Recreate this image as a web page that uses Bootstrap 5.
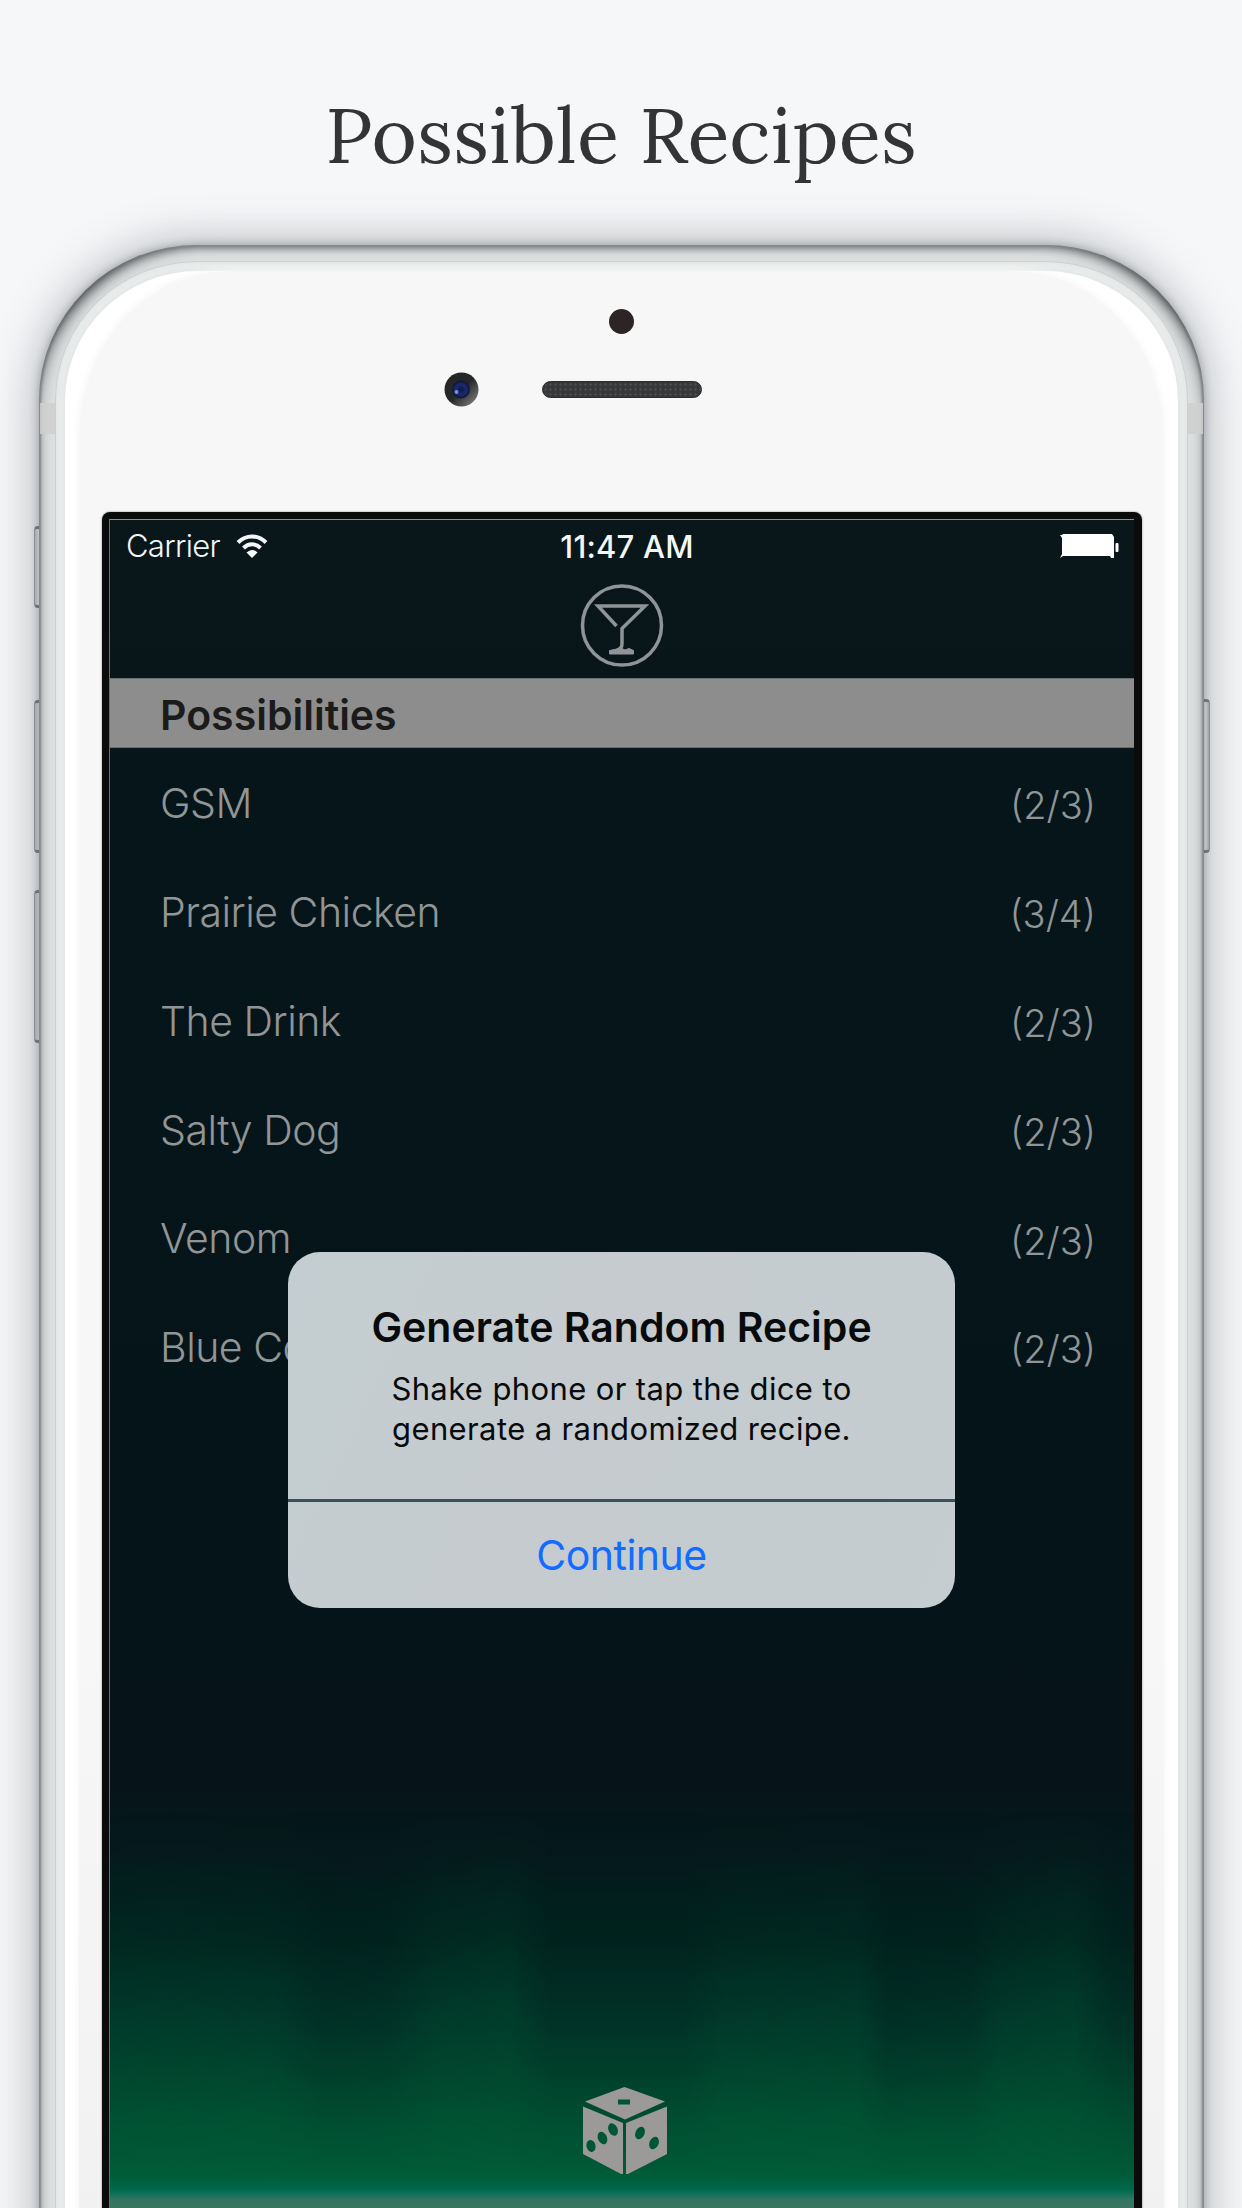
<!DOCTYPE html>
<html lang="en">
<head>
<meta charset="utf-8">
<meta name="viewport" content="width=device-width, initial-scale=1">
<title>Possible Recipes</title>
<link href="https://cdn.jsdelivr.net/npm/bootstrap@5.3.0/dist/css/bootstrap.min.css" rel="stylesheet">
<style>
body{background:#f6f7f9;font-family:Inter,Roboto,sans-serif;height:2208px;overflow:hidden}
.page-wrap{width:1242px;height:2208px;overflow:hidden}
.headline{font:400 77.6px/100px Lora,"Liberation Serif",serif;color:#323436;height:245px;padding-top:85px}
/* phone shell: nested rims from metal edge to glass */
.phone{width:1165px;height:2300px;margin-left:39px;border-radius:158px/155px;background:#dee1e1;padding:16px 16px 0;
 box-shadow:0 0 8px rgba(60,64,70,.35),0 0 48px rgba(60,66,74,.42),inset 0 0 2px 2px #85888b,inset 0 5px 6px -1px #8b8e91,inset 0 0 13px 2px #a4a7aa}
.corner-shade{left:0;top:0;width:1165px;height:190px;border-radius:158px 158px 0 0/155px 155px 0 0;
 box-shadow:inset 0 0 15px 5px rgba(80,83,87,.75);
 -webkit-mask:radial-gradient(circle at 38px 42px,#000 20px,transparent 125px) 0 0/200px 190px no-repeat,radial-gradient(circle at 162px 42px,#000 20px,transparent 125px) 100% 0/200px 190px no-repeat;
 mask:radial-gradient(circle at 38px 42px,#000 20px,transparent 125px) 0 0/200px 190px no-repeat,radial-gradient(circle at 162px 42px,#000 20px,transparent 125px) 100% 0/200px 190px no-repeat}
.rim{border-radius:142px/139px;background:#ebeded;border:1px solid #cbcfcf;height:2300px;padding:9px 9px 0;box-shadow:inset 0 0 9px #dfe2e2}
.glass-edge{border-radius:133px/130px;background:#fff;height:2300px;padding:0 14px;box-shadow:0 0 4px 1px #e0e3e3}
.glass{border-radius:150px/165px;background:linear-gradient(#f7f7f7,#f7f7f7 60%,#f1f1f1 85%);height:2300px;box-shadow:0 0 7px 2px #f8f8f8}
.sensors{height:241px}
.sensor-dot{width:25px;height:25px;border-radius:50%;background:#2c2425;left:570px;top:64px}
.camera{width:35px;height:35px;left:405px;top:127px}
.speaker{width:160px;height:17px;border-radius:9px;background-color:#37383a;left:503px;top:136px;border:1px solid #2b2c2d;
 background-image:radial-gradient(#4a4b4d 1px,transparent 1.4px);background-size:5px 5px}
.side-key{background:linear-gradient(90deg,#c9ccd0,#fff 60%,#b4b7ba);border:1px solid #a2a5a8;border-top:3px solid #85888b;border-bottom:3px solid #85888b;border-radius:4px}
.band{background:#cfcfcf;width:16px;height:31px;top:158px;opacity:.85}
/* screen */
.screen-bezel{width:1040px;height:1720px;margin-left:23px;border-radius:8px 8px 0 0;background:#0b0b0c;padding:7px 8px 0 7px;box-shadow:0 0 2px #777}
.app-screen{width:1025px;height:1700px;border-top:1px solid #8b9294;border-left:1px solid #687174;
 background:linear-gradient(#09161a 0,#08161a 158px,#051519 230px,#061419 1270px,#051a1d 1340px,#00251f 1420px,#003629 1493px,#00472f 1560px,#005033 1594px,#005c38 1654px,#00674a 1669px,#12705a 1674px,#357561 1680px,#3c7562 1690px)}
.curtain{left:0;top:1290px;width:1024px;height:372px;
 background:linear-gradient(90deg,rgba(0,85,50,.08) 0,rgba(0,85,50,.1) 6%,rgba(0,85,50,.06) 16%,rgba(0,12,18,.16) 21%,rgba(0,12,18,.12) 27%,rgba(0,85,50,.12) 32%,rgba(0,85,50,.2) 39%,rgba(0,15,20,.12) 43%,rgba(0,15,20,.12) 56%,rgba(0,85,50,.06) 60%,rgba(0,85,50,.1) 73%,rgba(0,12,18,.18) 76%,rgba(0,12,18,.14) 84%,rgba(0,85,50,.08) 87%,rgba(0,85,50,.2) 94%,rgba(0,12,18,.14) 98%,rgba(0,12,18,.2) 100%);
 -webkit-mask:linear-gradient(transparent,#000 50%,#000 60%,transparent);mask:linear-gradient(transparent,#000 50%,#000 60%,transparent)}
.statusbar{height:52px;color:#f3f6f7;font-size:31px;line-height:54px}
.carrier{width:405px;letter-spacing:-.7px;padding-left:16px;font-weight:300}
.clock{font-weight:500;letter-spacing:.2px}
.status-right{width:395px;padding-right:15px}
.logo-bar{height:106px}
.section-head{height:70px;background:#8d8d8d;color:#1b1b1b;font-size:41px;font-weight:600;line-height:72px;padding-left:50px;border-top:1px solid #69716f;border-bottom:1px solid #69716f}
.recipe{height:108.8px;padding:3px 38px 0 50px;font-weight:300;font-size:41px;letter-spacing:-.5px;color:#919596}
.recipe .tally{font-size:38px;letter-spacing:0;padding-top:4px}
.alert-box{left:178px;top:732px;width:667px;height:356px;border-radius:32px;background:linear-gradient(115deg,#c4ced1,#c5cbcf 45%,#c4cdcf);color:#080a0b;overflow:hidden}
.alert-copy{height:250px;padding-top:51px;border-bottom:3px solid #37535a}
.alert-title{font-size:41px;font-weight:600;line-height:48px;margin-bottom:18px}
.alert-msg{font-size:31px;line-height:39.6px;letter-spacing:.38px;font-weight:400}
.alert-go{height:106px;font-size:41px;letter-spacing:-.5px;color:#116cff;line-height:107px}
.dice-btn{left:472px;top:1566px}
</style>
</head>
<body>
<div class="page-wrap position-relative">
  <h1 class="headline text-center mb-0">Possible Recipes</h1>
  <div class="side-key position-absolute" style="left:34px;top:526px;width:8px;height:82px"></div>
  <div class="side-key position-absolute" style="left:34px;top:700px;width:10px;height:153px"></div>
  <div class="side-key position-absolute" style="left:34px;top:890px;width:10px;height:153px"></div>
  <div class="side-key position-absolute" style="left:1200px;top:699px;width:10px;height:154px"></div>

  <div class="phone position-relative">
    <div class="corner-shade position-absolute"></div>
    <div class="band position-absolute" style="left:1px"></div>
    <div class="band position-absolute" style="right:1px"></div>
    <div class="rim position-relative"><div class="glass-edge"><div class="glass d-flex flex-column">
      <div class="sensors w-100"></div>
      <main class="screen-bezel">
        <div class="app-screen position-relative">
          <div class="curtain position-absolute"></div>
          <header>
            <div class="statusbar d-flex justify-content-between">
              <div class="carrier d-flex align-items-center">Carrier
                <svg class="ms-3" style="margin-top:-1px" width="32" height="24" viewBox="0 0 32 24" fill="none" stroke="#f3f6f7"><path d="M2 8.500C10 .5 22 .5 30 8.500" stroke-width="4"/><path d="M7.500 14C12.500 9 19.500 9 24.500 14" stroke-width="4"/><path d="M10.500 18.500Q16 13.500 21.500 18.500L16 24Z" fill="#f3f6f7" stroke="none"/></svg>
              </div>
              <div class="clock">11:47 AM</div>
              <div class="status-right d-flex justify-content-end align-items-center">
                <svg width="60" height="26" viewBox="0 0 60 26" fill="#fff"><path d="M1 2H3Q3 1 5 1H53L55 4V25H52L51 23H4L1 25L3 21V5Z"/><rect x="56.500" y="10" width="3" height="9" rx="1"/></svg>
              </div>
            </div>
            <div class="logo-bar d-flex justify-content-center">
              <svg width="86" height="86" viewBox="0 0 86 86" fill="none" stroke="#8f9496" style="margin-top:10px"><circle cx="43" cy="43.500" r="39.500" stroke-width="3.500"/><path d="M37.500 44L19 24H66L43 46.500V62Q43 66.500 38 68" stroke-width="3.500"/><path d="M30.500 72V68.500L38 67L42 66L46 68L50 66.500L54.500 68.500V72Z" fill="#8f9496" stroke-width="1"/></svg>
            </div>
          </header>
          <h2 class="section-head mb-0">Possibilities</h2>
          <ul class="list-unstyled mb-0">
            <li class="recipe d-flex justify-content-between align-items-center"><span>GSM</span><span class="tally">(2/3)</span></li>
            <li class="recipe d-flex justify-content-between align-items-center"><span>Prairie Chicken</span><span class="tally">(3/4)</span></li>
            <li class="recipe d-flex justify-content-between align-items-center"><span>The Drink</span><span class="tally">(2/3)</span></li>
            <li class="recipe d-flex justify-content-between align-items-center"><span>Salty Dog</span><span class="tally">(2/3)</span></li>
            <li class="recipe d-flex justify-content-between align-items-center"><span>Venom</span><span class="tally">(2/3)</span></li>
            <li class="recipe d-flex justify-content-between align-items-center"><span>Blue Co</span><span class="tally">(2/3)</span></li>
          </ul>
          <div class="alert-box position-absolute text-center" role="dialog">
            <div class="alert-copy">
              <div class="alert-title">Generate Random Recipe</div>
              <div class="alert-msg">Shake phone or tap the dice to<br>generate a randomized recipe.</div>
            </div>
            <div class="alert-go">Continue</div>
          </div>
          <div class="dice-btn position-absolute">
            <svg width="86" height="90" viewBox="0 0 86 90" fill="#9b9a99" class="d-block"><path d="M42.500 1L83 15.500L43 33.500L3 15.500Z"/><path d="M1 20.500L41 37V88H39L1 68Z"/><path d="M85 20.500L44 37V88H46L85 68Z"/><g fill="#005534"><rect x="36" y="13.500" width="12" height="5"/><ellipse cx="9" cy="60" rx="4.500" ry="6" transform="rotate(-15 9 60)"/><ellipse cx="20.500" cy="52" rx="4.500" ry="6.500" transform="rotate(-25 20.500 52)"/><ellipse cx="31" cy="43.500" rx="4.500" ry="6.500" transform="rotate(-25 31 43.500)"/><ellipse cx="58" cy="47" rx="4.500" ry="6.500" transform="rotate(25 58 47)"/><ellipse cx="72" cy="57" rx="4.500" ry="6.500" transform="rotate(25 72 57)"/></g></svg>
          </div>
        </div>
      </main>
    </div></div></div>
    <div class="sensor-dot position-absolute"></div>
    <svg class="camera position-absolute" viewBox="0 0 35 35"><defs><linearGradient id="ring" x1="0" y1="0" x2="1" y2="1"><stop offset=".5" stop-color="#252627"/><stop offset="1" stop-color="#8b8c8e"/></linearGradient><radialGradient id="lens"><stop offset="0" stop-color="#0d1540"/><stop offset=".6" stop-color="#1c2b72"/><stop offset="1" stop-color="#0d1230"/></radialGradient></defs><circle cx="17.500" cy="17.500" r="17" fill="url(#ring)"/><circle cx="17" cy="17.500" r="9" fill="url(#lens)"/><circle cx="12.500" cy="20" r="2" fill="#6f95d8"/></svg>
    <div class="speaker position-absolute"></div>
  </div>
</div>
<script src="https://cdn.jsdelivr.net/npm/bootstrap@5.3.0/dist/js/bootstrap.bundle.min.js"></script>
</body>
</html>
